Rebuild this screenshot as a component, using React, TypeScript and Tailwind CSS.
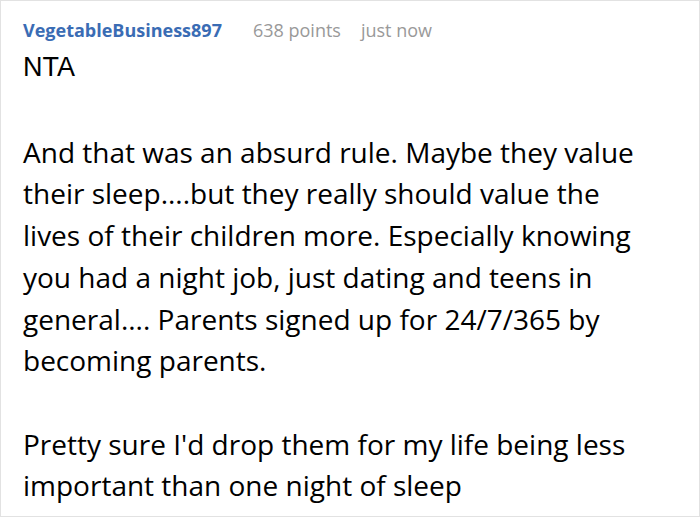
export default function App() {
  return (
    <div className="w-[700px] h-[517px] bg-white border border-[#e2e2e2] overflow-hidden font-['Open_Sans',sans-serif]">
      <div className="pl-[22px] pt-[15px]">
        <div className="flex items-baseline text-[18px] leading-[28px]">
          <span className="font-bold text-[#3a6cb4]">VegetableBusiness897</span>
          <span className="ml-[31px] text-[#999999]">638 points</span>
          <span className="ml-[20px] text-[#999999]">just now</span>
        </div>
        <div className="mt-[3px] w-[640px] text-[28px] leading-[41.7px] text-black">
          <p className="font-['Liberation_Sans',sans-serif] text-[27px]">NTA</p>
          <p className="mt-[43px]">
            And that was an absurd rule. Maybe they value their sleep....but they really should value the lives of
            their children more. Especially knowing you had a night job, just dating and teens in general.... Parents
            signed up for 24/7/365 by becoming parents.
          </p>
          <p className="mt-[41.7px]">
            Pretty sure I'd drop them for my life being less important than one night of sleep
          </p>
        </div>
      </div>
    </div>
  )
}
